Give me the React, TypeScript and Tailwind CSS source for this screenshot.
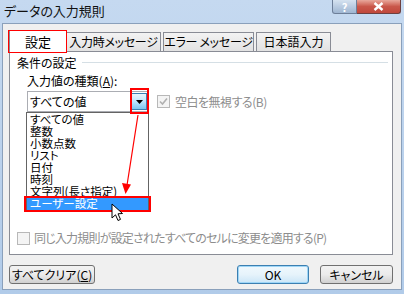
import React from "react";

const items = ["すべての値", "整数", "小数点数", "リスト", "日付", "時刻", "文字列(長さ指定)"];

function Check() {
  return (
    <div className="w-[13px] h-[13px] border border-[#b8b8b8] bg-[#f4f4f4] flex items-center justify-center shrink-0">
      <svg width="9" height="9" viewBox="0 0 9 9">
        <path d="M1 4.5 L3.5 7 L8 1.5" fill="none" stroke="#b0b0b0" strokeWidth="1.6" />
      </svg>
    </div>
  );
}

function EmptyCheck() {
  return <div className="w-[13px] h-[13px] border border-[#b8b8b8] bg-[#f4f4f4] shrink-0" />;
}

export default function App() {
  return (
    <div
      className="relative w-[404px] h-[294px] overflow-hidden bg-gradient-to-b from-[#c5d9f0] to-[#b1cbe9] font-['Noto_Sans_CJK_JP',sans-serif] text-[12px] leading-[14px] text-black [font-feature-settings:'palt'] whitespace-nowrap"
    >
      {/* title bar */}
      <div className="h-[23px] flex items-start relative">
        <div className="pl-[4px] pt-[2px] text-[13px] leading-[17px] text-[#111]">データの入力規則</div>
        <div className="absolute right-[3px] top-0 flex">
          <div className="w-[25px] h-[14px] rounded-bl-[3px] border border-t-0 border-[#6d7f99] bg-gradient-to-b from-[#d5e2f0] to-[#9fb6d2] flex items-center justify-center text-white text-[11px] leading-[12px] font-bold">
            ?
          </div>
          <div className="w-[44px] h-[14px] rounded-br-[3px] border border-t-0 border-l-0 border-[#6d4040] bg-gradient-to-b from-[#e8a89c] via-[#c9574a] to-[#c0483c] flex items-center justify-center">
            <svg width="11" height="9" viewBox="0 0 11 9">
              <path d="M1.5 1 L9.5 8 M9.5 1 L1.5 8" stroke="#fff" strokeWidth="2.4" />
            </svg>
          </div>
        </div>
      </div>

      {/* body */}
      <div className="ml-[2px] mr-[2px] h-[267px] bg-[#f0f0f0] border border-[#8aa0bb] pt-[6px] pl-[6px]">
        {/* tabs */}
        <div className="flex items-end h-[22px] relative z-10">
          <div className="w-[58px] h-[22px] bg-white border border-b-0 border-[#898c95] flex items-center justify-center text-[13px]">
            設定
          </div>
          <div className="w-[95px] h-[19px] ml-[-1px] mb-[1px] bg-gradient-to-b from-[#f3f3f3] to-[#e2e2e2] border border-b-0 border-[#898c95] flex items-center justify-center tracking-[-0.3px]">
            入力時メッセージ
          </div>
          <div className="w-[91px] h-[19px] ml-[2px] mb-[1px] bg-gradient-to-b from-[#f3f3f3] to-[#e2e2e2] border border-b-0 border-[#898c95] flex items-center justify-center tracking-[-0.3px]">
            エラー メッセージ
          </div>
          <div className="w-[75px] h-[19px] ml-[2px] mb-[1px] bg-gradient-to-b from-[#f3f3f3] to-[#e2e2e2] border border-b-0 border-[#898c95] flex items-center justify-center">
            日本語入力
          </div>
        </div>
        {/* panel */}
        <div className="w-[384px] h-[204px] mt-[-1px] bg-white border border-[#898c95] pt-[4px] pl-[7px] flex flex-col">
          <div className="flex items-center h-[14px]">
            <span>条件の設定</span>
            <div className="ml-[5px] w-[306px] h-[2px] border-t border-b border-t-[#d5dfe5] border-b-white" />
          </div>
          <div className="mt-[4px] ml-[10px] h-[14px]">
            入力値の種類(<span className="underline">A</span>):
          </div>
          <div className="mt-[3px] ml-[10px] flex items-center">
            <div className="w-[122px] h-[21px] border border-[#abadb3] bg-white flex items-center pl-[2px] relative">
              すべての値
              <div className="absolute right-[1px] top-[1px] w-[16px] h-[17px] border border-[#3c7fb1] bg-gradient-to-b from-[#eaf6fd] via-[#bee6fd] to-[#7ec5ee] flex items-center justify-center">
                <svg width="7" height="4" viewBox="0 0 7 4">
                  <path d="M0 0 H7 L3.5 4 Z" fill="#000" />
                </svg>
              </div>
            </div>
            <div className="ml-[8px] flex items-center gap-[5px] text-[#8d8d8d]">
              <Check />
              <span className="tracking-[-0.5px]">空白を無視する(B)</span>
            </div>
          </div>
          <div className="mt-auto mb-[9px] flex items-center gap-[4px] text-[#8d8d8d]">
            <EmptyCheck />
            <span className="tracking-[-0.8px]">同じ入力規則が設定されたすべてのセルに変更を適用する(P)</span>
          </div>
        </div>
        {/* buttons */}
        <div className="mt-[10px] w-[384px] flex items-center">
          <div className="w-[86px] h-[19px] rounded-[3px] border border-[#707070] bg-gradient-to-b from-[#f2f2f2] via-[#ebebeb] to-[#d0d0d0] flex items-center justify-center">
            すべてクリア(<span className="underline">C</span>)
          </div>
          <div className="ml-auto w-[72px] h-[19px] rounded-[3px] border border-[#3c7fb1] bg-gradient-to-b from-[#f0f8fd] via-[#e6f3fb] to-[#cbe6f7] shadow-[inset_0_0_0_1px_#9ed6f7] flex items-center justify-center">
            OK
          </div>
          <div className="ml-[11px] w-[73px] h-[19px] rounded-[3px] border border-[#707070] bg-gradient-to-b from-[#f2f2f2] via-[#ebebeb] to-[#d0d0d0] flex items-center justify-center">
            キャンセル
          </div>
        </div>
      </div>

      {/* red box around selected tab */}
      <div className="absolute left-[8px] top-[30px] w-[59px] h-[23px] border-[1.5px] border-[#ff0000] z-20" />

      {/* dropdown list */}
      <div className="absolute left-[26px] top-[112px] w-[123px] h-[100px] bg-white border border-[#646464] z-20 text-[11.5px] leading-[12px]">
        {items.map((t) => (
          <div key={t} className="h-[12px] pl-[3px]">
            {t}
          </div>
        ))}
        <div className="h-[13px] pl-[3px] bg-[#3399ff] text-white leading-[13px]">ユーザー設定</div>
      </div>

      {/* red box around dropdown button */}
      <div className="absolute left-[130px] top-[88px] w-[19px] h-[26px] border-2 border-[#ff0000] z-30" />
      {/* red box around highlighted item */}
      <div className="absolute left-[24px] top-[196px] w-[127px] h-[16px] border-2 border-[#ff0000] z-30" />

      {/* arrow + cursor */}
      <svg className="absolute left-0 top-0 z-40" width="404" height="294" viewBox="0 0 404 294">
        <line x1="138" y1="115" x2="127.2" y2="184" stroke="#ff0000" strokeWidth="1.2" />
        <path d="M122 183 L131 184.5 L125.5 194 Z" fill="#ff0000" />
        <path
          d="M112 204 L112 218 L115.5 214.8 L118 220.5 L120.5 219.4 L118 213.8 L122.5 213.5 Z"
          fill="#fff"
          stroke="#000"
          strokeWidth="1"
          strokeLinejoin="miter"
        />
      </svg>
    </div>
  );
}
